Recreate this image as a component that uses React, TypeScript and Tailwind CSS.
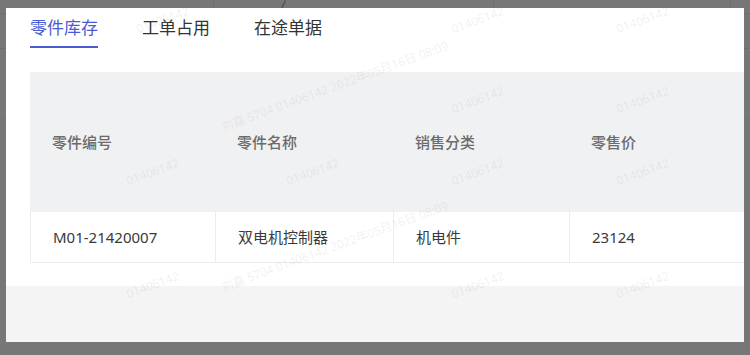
import React from 'react';

const tabs = ['零件库存', '工单占用', '在途单据'];

const columns = [
  { title: '零件编号', width: 'w-[185px]' },
  { title: '零件名称', width: 'w-[178px]' },
  { title: '销售分类', width: 'w-[176px]' },
  { title: '零售价', width: 'flex-1' },
];

const row = ['M01-21420007', '双电机控制器', '机电件', '23124'];

// faint watermark stamps laid over the whole shot
const marks = [
  { x: 140, y: 20, t: '01406142' },
  { x: 455, y: 20, t: '01406142' },
  { x: 620, y: 20, t: '01406142' },
  { x: 455, y: 100, t: '01406142' },
  { x: 620, y: 100, t: '01406142' },
  { x: 130, y: 172, t: '01406142' },
  { x: 290, y: 172, t: '01406142' },
  { x: 455, y: 172, t: '01406142' },
  { x: 620, y: 172, t: '01406142' },
  { x: 130, y: 285, t: '01406142' },
  { x: 455, y: 285, t: '01406142' },
  { x: 620, y: 285, t: '01406142' },
  { x: 225, y: 118, t: '刘嘉 5704 01406142 2022年05月16日 08:09' },
  { x: 225, y: 278, t: '刘嘉 5704 01406142 2022年05月16日 08:09' },
];

export default function App() {
  return (
    <div
      className="relative w-[750px] h-[355px] overflow-hidden bg-[#777777] pt-[8px] pl-[6px]"
      style={{ fontFamily: '"Noto Sans", "Noto Sans CJK SC", sans-serif' }}
    >
      {/* page behind the mask */}
      <div className="absolute inset-0">
        <div className="absolute left-0 right-0 top-[13px] h-px bg-[#6a6d76]" />
        <div className="absolute left-0 right-0 top-[48px] h-px bg-[#6a6d76]" />
        <div className="absolute left-0 right-0 top-[118px] h-px bg-[#6f7178]" />
        <div className="absolute top-0 h-[13px] left-[213px] w-px bg-[#6a6d76]" />
        <div className="absolute top-0 h-[13px] left-[493px] w-px bg-[#6a6d76]" />
        <div className="absolute top-0 h-[13px] left-[730px] w-px bg-[#6a6d76]" />
        <div className="absolute top-0 h-[9px] left-[283px] w-px bg-[#444] rotate-[25deg]" />
      </div>

      <div className="relative w-[738px] h-[334px] bg-white flex flex-col">
        {/* tabs */}
        <div className="flex gap-[44px] pl-[24px] pt-[8px]">
          {tabs.map((tab, i) => (
            <div key={tab} className="flex flex-col">
              <span
                className={`text-[17px] leading-[24px] ${i === 0 ? 'text-[#4b5bd4]' : 'text-[#333333]'}`}
              >
                {tab}
              </span>
              <div className={`mt-[6px] h-[2px] ${i === 0 ? 'bg-[#4b5bd4]' : 'bg-transparent'}`} />
            </div>
          ))}
        </div>

        {/* table */}
        <div className="ml-[24px] mt-[24px]">
          <div className="flex h-[140px] items-center bg-[#f0f1f3]">
            {columns.map((c) => (
              <div key={c.title} className={`${c.width} pl-[22px] text-[15px] font-medium text-[#6b6b6b]`}>
                {c.title}
              </div>
            ))}
          </div>
          <div className="flex h-[51px] border-l border-b border-[#ebedf0]">
            {row.map((v, i) => (
              <div
                key={v}
                className={`${columns[i].width} flex items-center pl-[22px] text-[15px] text-[#3a3a3a] ${i < 3 ? 'border-r border-[#ebedf0]' : ''}`}
              >
                {v}
              </div>
            ))}
          </div>
        </div>

        <div className="mt-[23px] flex-1 bg-[#f4f4f4]" />
      </div>

      {/* watermark layer */}
      <div className="pointer-events-none absolute inset-0">
        {marks.map((m, i) => (
          <span
            key={i}
            className="absolute whitespace-nowrap text-[12px] text-[rgba(160,160,160,0.16)] -rotate-[20deg] origin-bottom-left"
            style={{ left: m.x, top: m.y }}
          >
            {m.t}
          </span>
        ))}
      </div>
    </div>
  );
}
